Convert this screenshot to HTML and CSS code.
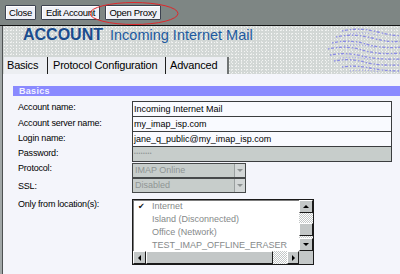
FILE: index.html
```html
<!DOCTYPE html>
<html>
<head>
<meta charset="utf-8">
<link rel="stylesheet" href="styles.css">
</head>
<body>
<div class="toolbar">
  <button class="btn btn-close">Close</button>
  <button class="btn btn-edit">Edit Account</button>
  <button class="btn btn-proxy">Open Proxy</button>
  <svg class="highlight" width="92" height="26" viewBox="0 0 92 26"><ellipse cx="46" cy="12.5" rx="44" ry="11" fill="none" stroke="#e0262a" stroke-width="1"/></svg>
</div>
<div class="frame">
  <div class="header">
    <h1 class="title"><span class="title-main">ACCOUNT</span><span class="title-sub">Incoming Internet Mail</span></h1>
    <svg class="header-art" width="80" height="48" viewBox="0 0 80 48">
      <g fill="none" stroke="#8383e6" stroke-width="1.3" stroke-dasharray="1.5 1.5 3 2">
        <path d="M22 5 Q40 1 58 6 T82 9"/>
        <path d="M16 11 Q34 7 52 12 T82 15"/>
        <path d="M12 17 Q30 13 46 18 T82 21"/>
        <path d="M8 23 Q26 19 42 24 T82 27"/>
        <path d="M10 29 Q26 26 42 30 T82 33"/>
        <path d="M14 35 Q30 32 44 36 T82 39"/>
        <path d="M22 41 Q36 39 50 42 T82 45"/>
      </g>
      <g fill="none" stroke="#8f8fec" stroke-width="1" stroke-dasharray="1 2">
        <path d="M30 8 Q44 5 60 10"/>
        <path d="M24 20 Q40 17 56 22"/>
        <path d="M20 32 Q36 30 52 34"/>
        <path d="M30 45 Q44 43 60 46"/>
      </g>
    </svg>
    <div class="tabs">
      <div class="tab tab-basics">Basics</div>
      <div class="tab tab-protocol">Protocol Configuration</div>
      <div class="tab tab-advanced">Advanced</div>
    </div>
  </div>
  <div class="content">
    <div class="section-bar">Basics</div>
    <div class="form">
      <div class="label">Account name:</div>
      <div class="input">Incoming Internet Mail</div>
      <div class="label">Account server name:</div>
      <div class="input input-stacked">my_imap_isp.com</div>
      <div class="label">Login name:</div>
      <div class="input input-stacked">jane_q_public@my_imap_isp.com</div>
      <div class="label">Password:</div>
      <div class="input input-stacked input-disabled"><span class="dots">••••••••</span></div>
      <div class="label label-select">Protocol:</div>
      <div class="select select-first"><span class="select-text">IMAP Online</span><span class="select-btn"></span></div>
      <div class="label label-ssl">SSL:</div>
      <div class="select"><span class="select-text">Disabled</span><span class="select-btn"></span></div>
      <div class="label label-list">Only from location(s):</div>
      <div class="listbox">
        <div class="list-items">
          <div class="list-item"><span class="check">✔</span>Internet</div>
          <div class="list-item"><span class="check"></span>Island (Disconnected)</div>
          <div class="list-item"><span class="check"></span>Office (Network)</div>
          <div class="list-item"><span class="check"></span>TEST_IMAP_OFFLINE_ERASER</div>
        </div>
        <div class="vscroll">
          <span class="sb-btn sb-up"></span>
          <span class="sb-track sb-track-top"></span>
          <span class="sb-thumb sb-thumb-v"></span>
          <span class="sb-track sb-track-fill"></span>
          <span class="sb-btn sb-down"></span>
        </div>
        <div class="hscroll">
          <span class="sb-btn sb-left"></span>
          <span class="sb-thumb sb-thumb-h"></span>
          <span class="sb-track sb-track-fill"></span>
          <span class="sb-btn sb-right"></span>
        </div>
        <div class="sb-corner"></div>
      </div>
    </div>
  </div>
</div>
</body>
</html>
```
FILE: styles.css
```css
* { box-sizing: border-box; }
html, body { margin: 0; }
body {
  width: 400px;
  height: 274px;
  overflow: hidden;
  display: flex;
  flex-direction: column;
  background: #f4f5fb;
  font-family: "Liberation Sans", Arial, sans-serif;
  color: #000;
}

/* toolbar */
.toolbar {
  position: relative;
  flex: none;
  display: flex;
  align-items: flex-start;
  gap: 5px;
  height: 26px;
  padding: 5px 0 0 5px;
  background: #7e8684;
  border-bottom: 1px solid #141616;
}
.btn {
  height: 15px;
  padding: 0;
  border: 1px solid #3c4250;
  border-radius: 1px;
  background: #eff1f7;
  box-shadow: inset 1px 1px 0 #fff;
  font-family: "Liberation Sans", Arial, sans-serif;
  font-size: 9.5px;
  line-height: 13px;
  letter-spacing: -0.3px;
  color: #000;
  white-space: nowrap;
}
.btn-close { width: 31px; }
.btn-edit { width: 59px; }
.btn-proxy { width: 56px; }
.highlight {
  position: absolute;
  left: 88px;
  top: 1px;
  overflow: visible;
}

/* frame below toolbar */
.frame {
  flex: 1;
  display: flex;
  flex-direction: column;
  border-left: 2px solid #a2a8a8;
  padding-left: 1px;
  background: #4d5152;
}

/* header */
.header {
  position: relative;
  flex: none;
  height: 48px;
  display: flex;
  flex-direction: column;
  background-color: #d2d7d5;
  background-image:
    radial-gradient(circle, rgba(255,255,255,0.75) 0.5px, transparent 0.9px),
    radial-gradient(circle, rgba(255,255,255,0.5) 0.5px, transparent 0.9px);
  background-size: 3px 3px, 5px 4px;
  background-position: 0 0, 1px 2px;
}
.title {
  margin: 0;
  padding: 1px 0 0 20px;
  font-size: 16px;
  line-height: 16px;
  font-weight: normal;
  white-space: nowrap;
}
.title-main {
  font-weight: bold;
  color: #1a4c8e;
}
.title-sub {
  margin-left: 7px;
  font-size: 14.5px;
  color: #1d5a9f;
}
.header-art {
  position: absolute;
  right: 0;
  top: 0;
  opacity: 0.9;
}
.tabs {
  position: relative;
  display: flex;
  margin-top: auto;
  height: 17px;
  padding-left: 1px;
}
.tab {
  flex: none;
  height: 17px;
  line-height: 17px;
  font-size: 11px;
  letter-spacing: -0.2px;
  background: #eceef2;
  border-right: 1px solid #1e1e1e;
  padding-left: 4px;
  white-space: nowrap;
}
.tab-basics { width: 44px; padding-left: 3px; }
.tab-protocol { width: 118px; padding-left: 5px; }
.tab-advanced { width: 63px; border-right: 2px solid #6f7373; }

/* content */
.content {
  flex: 1;
  background: #f4f5fb;
  padding-top: 12px;
}
.section-bar {
  margin-left: 10px;
  height: 10px;
  padding-left: 6px;
  background: #8a8aff;
  color: #f2f2ff;
  font-weight: bold;
  font-size: 9px;
  line-height: 10px;
  letter-spacing: 0.3px;
}
.form {
  display: grid;
  grid-template-columns: 114px 260px;
  margin-top: 5px;
  padding-left: 15px;
}
.label {
  align-self: start;
  font-size: 9px;
  line-height: 12px;
  letter-spacing: -0.2px;
  white-space: nowrap;
}
.label-ssl { padding-top: 2px; }
.label-list { padding-top: 5px; }
.input {
  height: 16px;
  border: 1px solid #3b3d3f;
  background: #f9faff;
  font-size: 9px;
  line-height: 14px;
  padding-left: 1px;
  white-space: nowrap;
  overflow: hidden;
}
.input-stacked { margin-top: -1px; }
.input-disabled {
  background: #c7cdcb;
  color: #8d9392;
}
.dots {
  font-size: 5px;
  letter-spacing: 0.5px;
  vertical-align: top;
  line-height: 12px;
  color: #8f9595;
}
.select {
  width: 114px;
  height: 15px;
  display: flex;
  border: 1px solid #46494a;
  background: #c7cdcb;
  color: #8f9594;
  font-size: 9px;
  line-height: 13px;
}
.select-first { margin-top: 1px; }
.select-text {
  flex: 1;
  padding-left: 2px;
}
.select-btn {
  width: 11px;
  border-left: 1px solid #9aa0a0;
  background: #d3d7d7;
  display: flex;
  align-items: center;
  justify-content: center;
}
.select-btn::after {
  content: "";
  border-left: 3px solid transparent;
  border-right: 3px solid transparent;
  border-top: 3px solid #8d9292;
}

/* list box */
.listbox {
  width: 182px;
  height: 66px;
  margin-top: 6px;
  border: 1px solid #1a1a1a;
  background: #fff;
  box-shadow: inset 1px 1px 0 #7d7d7d;
  display: grid;
  grid-template-columns: 1fr 14px;
  grid-template-rows: 1fr 13px;
}
.list-items {
  padding-left: 5px;
  font-size: 9px;
  line-height: 13px;
  color: #85898a;
  overflow: hidden;
}
.list-item {
  display: flex;
  white-space: nowrap;
}
.check {
  flex: none;
  width: 14px;
  color: #111;
  font-family: "DejaVu Sans", sans-serif;
  font-size: 8px;
}
.vscroll {
  display: flex;
  flex-direction: column;
}
.hscroll {
  display: flex;
}
.sb-btn {
  flex: none;
  width: 14px;
  height: 13px;
  background: #c3c7c7;
  border: 1px solid;
  border-color: #fff #1a1a1a #1a1a1a #fff;
  display: flex;
  align-items: center;
  justify-content: center;
}
.sb-left { width: 13px; }
.sb-right { width: 12px; }
.sb-up::after {
  content: "";
  border-left: 3px solid transparent;
  border-right: 3px solid transparent;
  border-bottom: 3px solid #000;
}
.sb-down::after {
  content: "";
  border-left: 3px solid transparent;
  border-right: 3px solid transparent;
  border-top: 3px solid #000;
}
.sb-left::after {
  content: "";
  border-top: 3px solid transparent;
  border-bottom: 3px solid transparent;
  border-right: 3px solid #000;
}
.sb-right::after {
  content: "";
  border-top: 3px solid transparent;
  border-bottom: 3px solid transparent;
  border-left: 3px solid #000;
}
.sb-track {
  background: repeating-conic-gradient(#c3c7c7 0 25%, #fff 0 50%) 0 0 / 2px 2px;
}
.sb-track-top { flex: none; height: 10px; }
.sb-track-fill { flex: 1; }
.sb-thumb {
  flex: none;
  background: #c3c7c7;
  border: 1px solid;
  border-color: #fff #1a1a1a #1a1a1a #fff;
}
.sb-thumb-v { height: 13px; }
.sb-thumb-h { width: 127px; }
.sb-corner { background: #c3c7c7; }
```
